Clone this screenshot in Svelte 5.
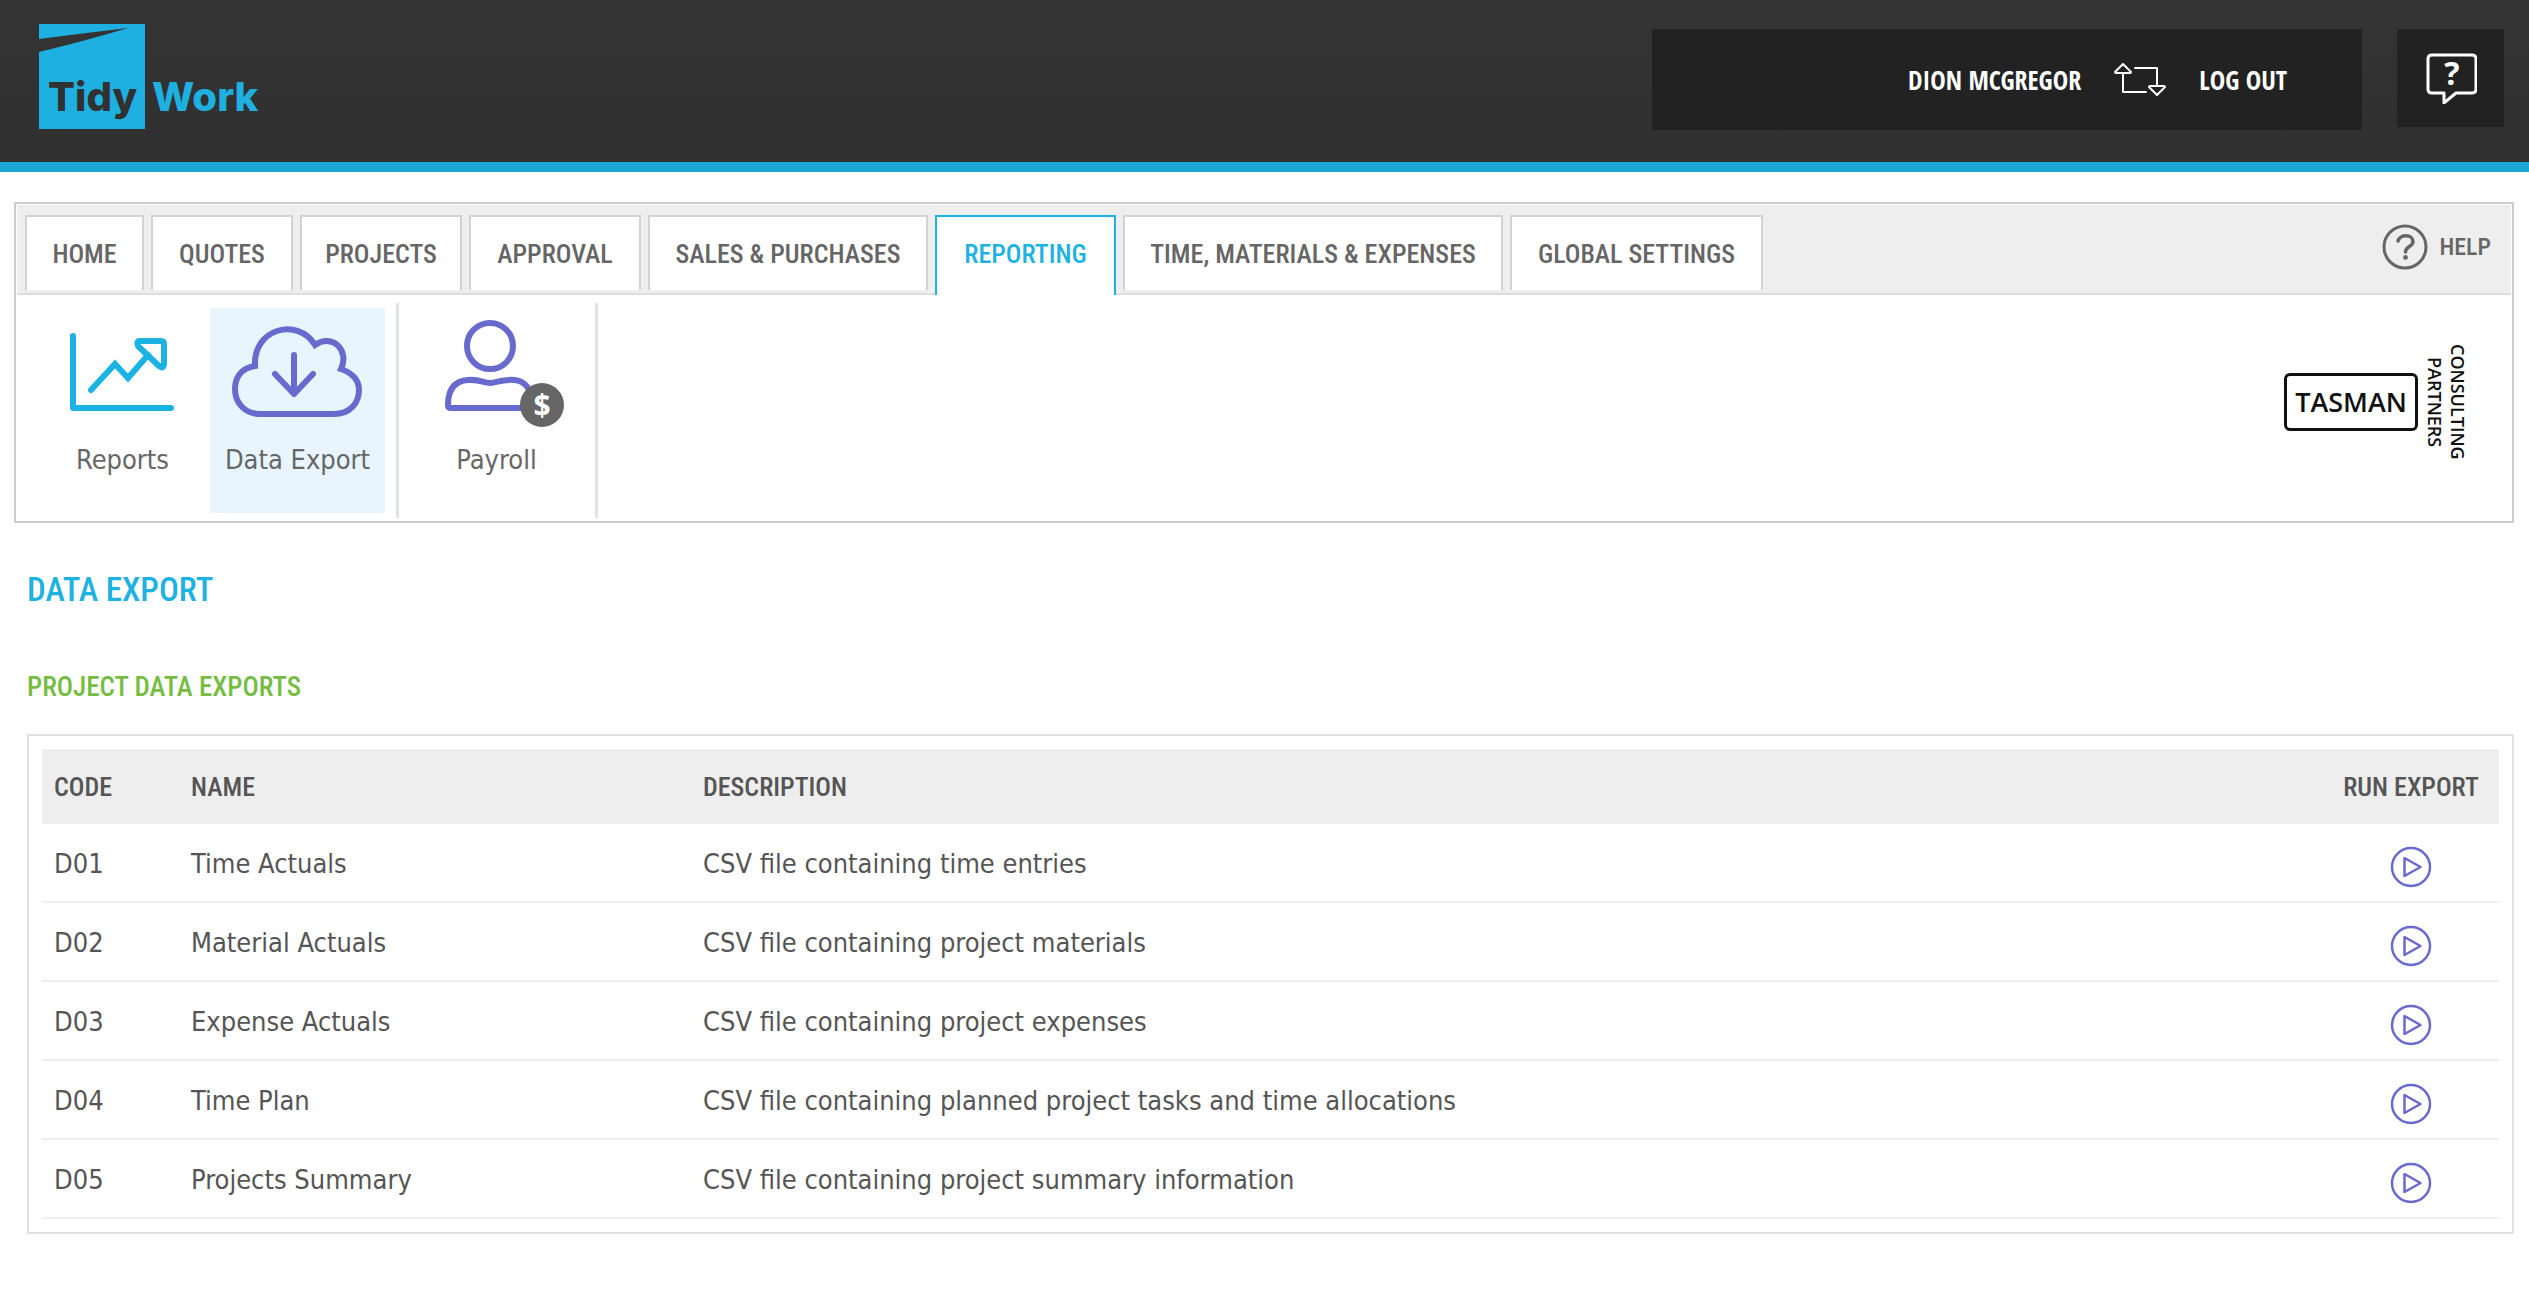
<script>
  const tabs = [
    'Home',
    'Quotes',
    'Projects',
    'Approval',
    'Sales & Purchases',
    'Reporting',
    'Time, Materials & Expenses',
    'Global Settings'
  ];
  const activeTab = 'Reporting';

  const exports = [
    { code: 'D01', name: 'Time Actuals', description: 'CSV file containing time entries' },
    { code: 'D02', name: 'Material Actuals', description: 'CSV file containing project materials' },
    { code: 'D03', name: 'Expense Actuals', description: 'CSV file containing project expenses' },
    { code: 'D04', name: 'Time Plan', description: 'CSV file containing planned project tasks and time allocations' },
    { code: 'D05', name: 'Projects Summary', description: 'CSV file containing project summary information' }
  ];
</script>

<header class="topbar">
  <a class="brand" href="#home" aria-label="Tidy Work">
    <svg width="220" height="106" viewBox="0 0 220 106" aria-hidden="true">
      <path fill="#1eb0e0" d="M0 0H106V105H0V28Q46 17 89 4Q46 9 0 15Z" />
      <text class="logo-text" x="9" y="87" fill="#313131">Tidy</text>
      <text class="logo-text" x="113" y="87" fill="#1eb0e0">Work</text>
    </svg>
  </a>
  <div class="account">
    <a class="account-link" href="#profile">Dion McGregor</a>
    <a class="switch" href="#switch" aria-label="Switch account">
      <svg width="54" height="36" viewBox="0 0 54 36" fill="none" stroke="#fff" stroke-width="2" stroke-linejoin="round" stroke-linecap="round" aria-hidden="true">
        <path d="M10 2L18 10Q18 11 17 11H3Q2 11 2 10Z" />
        <path d="M10 11V30H33" />
        <path d="M22 6H44V24" />
        <path d="M44 33L36 25Q36 24 37 24H51Q52 24 52 25Z" />
      </svg>
    </a>
    <a class="account-link" href="#logout">Log out</a>
  </div>
  <button class="support" aria-label="Support">
    <svg width="52" height="52" viewBox="0 0 52 52" aria-hidden="true">
      <path d="M7 3H47Q51 3 51 7V37Q51 41 47 41H31L19 51V41H7Q3 41 3 37V7Q3 3 7 3Z" fill="none" stroke="#fff" stroke-width="3" stroke-linejoin="round" />
      <text x="27" y="33" text-anchor="middle" class="bubble-mark">?</text>
    </svg>
  </button>
</header>

<section class="menu">
  <div class="menu-head">
    <nav class="tabs" aria-label="Main">
      {#each tabs as tab}
        <a class="tab" class:active={tab === activeTab} href="#{tab}">{tab}</a>
      {/each}
    </nav>
    <a class="help" href="#help">
      <svg width="46" height="46" viewBox="0 0 46 46" fill="none" stroke="#666" aria-hidden="true">
        <circle cx="23" cy="23" r="21" stroke-width="3" />
        <path d="M16 17C18 10 31 10 31 17.500C31 23 23.500 22 23.500 28" stroke-width="3.500" stroke-linecap="round" />
        <circle cx="23.500" cy="33.500" r="2.400" fill="#666" stroke="none" />
      </svg>
      Help
    </a>
  </div>
  <div class="ribbon">
    <div class="group">
      <a class="tile" href="#reports">
        <svg width="108" height="100" viewBox="0 0 108 100" fill="none" stroke="#1cb2e2" stroke-width="6" stroke-linecap="round" stroke-linejoin="round" aria-hidden="true">
          <path d="M4 19V91H102" />
          <path stroke-linejoin="miter" d="M22 73L46 47L59 61L79 38" />
          <path d="M70 24H92Q95 24 95 27V47Q94 53 90 49L69 29Q67 24 71 24Z" />
        </svg>
        Reports
      </a>
      <a class="tile active" href="#data-export">
        <svg width="136" height="102" viewBox="1 0 136 102" fill="none" stroke="#686acd" stroke-width="6" stroke-linecap="round" aria-hidden="true">
          <path d="M31 97H105C121 97 130 86 130 73C130 63 123 56 112 52C121 33 103 16 86 28C69 0 24 11 26 49C11 51 6 62 6 72C6 86 16 97 31 97Z" />
          <path d="M65 38V77M46 57L65 77L84 57" stroke-linejoin="round" />
        </svg>
        Data Export
      </a>
    </div>
    <div class="group">
      <a class="tile" href="#payroll">
        <svg width="136" height="110" viewBox="-15 3 136 110" fill="none" stroke="#686acd" stroke-width="6" stroke-linejoin="round" aria-hidden="true">
          <circle cx="46" cy="32" r="23" />
          <path d="M7 94Q4 94 4 91C4 76 10 67 24 66C36 65 39 69 46 69C53 69 57 65 70 66C82 67 88 76 88 91V94Z" />
          <circle cx="98" cy="91" r="22" fill="#666" stroke="none" />
          <text x="98" y="102" text-anchor="middle" class="coin-mark">$</text>
        </svg>
        Payroll
      </a>
    </div>
    <div class="client">
      <strong class="client-name">TASMAN</strong>
      <span class="client-tag">CONSULTING<br />PARTNERS</span>
    </div>
  </div>
</section>

<main class="content">
  <h1>Data Export</h1>
  <h2>Project Data Exports</h2>
  <div class="card">
    <table>
      <thead>
        <tr>
          <th class="code">Code</th>
          <th class="name">Name</th>
          <th>Description</th>
          <th class="run">Run Export</th>
        </tr>
      </thead>
      <tbody>
        {#each exports as row}
          <tr>
            <td>{row.code}</td>
            <td>{row.name}</td>
            <td>{row.description}</td>
            <td class="run">
              <button class="play" aria-label="Run export {row.code}">
                <svg width="42" height="42" viewBox="0 0 42 42" fill="none" stroke="#686acd" stroke-width="2.500" stroke-linejoin="round" aria-hidden="true">
                  <circle cx="21" cy="21" r="19" />
                  <path d="M14.500 12V30L30.500 21Z" />
                </svg>
              </button>
            </td>
          </tr>
        {/each}
      </tbody>
    </table>
  </div>
</main>

<style>
  :global(body) {
    background: #fff;
    color: #555;
    font-family: 'DejaVu Sans Condensed', 'DejaVu Sans', sans-serif;
    font-size: 27px;
    line-height: 36px;
  }

  a {
    color: inherit;
    text-decoration: none;
  }

  button {
    border: 0;
    padding: 0;
    cursor: pointer;
  }

  svg {
    display: block;
  }

  .topbar,
  .menu-head,
  h1,
  h2,
  th {
    font-family: 'Roboto Condensed', 'Open Sans Condensed', sans-serif;
    font-weight: 500;
    text-transform: uppercase;
  }

  .topbar {
    display: flex;
    align-items: flex-start;
    box-sizing: border-box;
    height: 172px;
    padding: 24px 25px 0 39px;
    border-bottom: 10px solid #1ca7d5;
    background: linear-gradient(#343434, #303030);
  }

  .brand {
    margin-right: auto;
    text-transform: none;
  }

  .logo-text {
    font: 800 40px Inter, sans-serif;
  }

  .account {
    display: flex;
    align-items: center;
    justify-content: flex-end;
    gap: 32px;
    box-sizing: border-box;
    width: 710px;
    height: 101px;
    margin-top: 5px;
    padding-right: 75px;
    background: #222;
    color: #fff;
    font-family: 'Open Sans Condensed', 'Roboto Condensed', sans-serif;
    font-size: 26px;
    font-weight: 700;
  }

  .support {
    display: grid;
    place-items: center;
    width: 107px;
    height: 98px;
    margin: 5px 0 0 35px;
    background: #222;
  }

  .bubble-mark {
    fill: #fff;
    font: 700 32px 'Open Sans', sans-serif;
  }

  .menu {
    margin: 30px 15px 0 14px;
    border: 2px solid #ccc;
    padding: 1px;
  }

  .menu-head {
    display: flex;
    align-items: flex-start;
    justify-content: space-between;
    height: 78px;
    padding: 10px 20px 0 8px;
    border-bottom: 2px solid #ddd;
    background: #eee;
    color: #666;
    font-size: 26px;
  }

  .tabs {
    display: grid;
    grid-template-columns: 119px 142px 162px 172px 280px 181px 380px 253px;
    gap: 7px;
  }

  .tab {
    height: 73px;
    border: 2px solid #d2d2d2;
    border-bottom: 0;
    background: #fff;
    line-height: 74px;
    text-align: center;
    white-space: nowrap;
  }

  .tab.active {
    height: 78px;
    border-color: #1cb2e2;
    color: #1cb2e2;
  }

  .help {
    display: flex;
    align-items: center;
    gap: 11px;
    height: 64px;
    font-size: 24px;
  }

  .ribbon {
    display: flex;
    color: #666;
    padding: 8px 42px 2px 8px;
  }

  .group {
    display: flex;
    padding: 5px 11px 5px 10px;
    border-right: 3px solid #e2e2e2;
  }

  .tile {
    display: flex;
    flex-direction: column;
    align-items: center;
    justify-content: space-between;
    box-sizing: border-box;
    width: 175px;
    height: 205px;
    padding: 9px 0 35px;
  }

  .tile.active {
    background: #e9f5fe;
  }

  .coin-mark {
    fill: #fff;
    stroke: none;
    font: 700 30px 'Open Sans', sans-serif;
  }

  .client {
    display: flex;
    align-items: center;
    gap: 5px;
    margin-left: auto;
    padding-bottom: 17px;
    color: #111;
    font-family: 'Open Sans', sans-serif;
  }

  .client-name {
    padding: 8px;
    border: 3px solid #111;
    border-radius: 6px;
    font-size: 27px;
    font-weight: 600;
  }

  .client-tag {
    writing-mode: vertical-rl;
    font-size: 18px;
    font-weight: 600;
    line-height: 23px;
    text-align: center;
  }

  .content {
    padding: 0 15px 0 27px;
  }

  h1,
  h2 {
    margin: 0;
  }

  h1 {
    padding-top: 42px;
    color: #1cb2e2;
    font-size: 33px;
    line-height: 50px;
  }

  h2 {
    padding: 52px 0 27px;
    color: #76bd43;
    font-size: 27px;
    line-height: 40px;
  }

  .card {
    border: 2px solid #e4e0e1;
    padding: 13px;
  }

  table {
    width: 100%;
    border-collapse: separate;
    border-spacing: 0;
    table-layout: fixed;
  }

  th,
  td {
    box-sizing: border-box;
    padding: 2px 12px 0;
    text-align: left;
  }

  th {
    height: 75px;
    padding-top: 0;
    background: #eee;
    font-size: 26px;
  }

  td {
    height: 79px;
    border-bottom: 2px solid #eee;
  }

  .code {
    width: 137px;
  }

  .name {
    width: 512px;
  }

  .run {
    width: 176px;
    text-align: center;
  }

  .play {
    display: block;
    margin: 6px auto 0;
    background: none;
  }
</style>
